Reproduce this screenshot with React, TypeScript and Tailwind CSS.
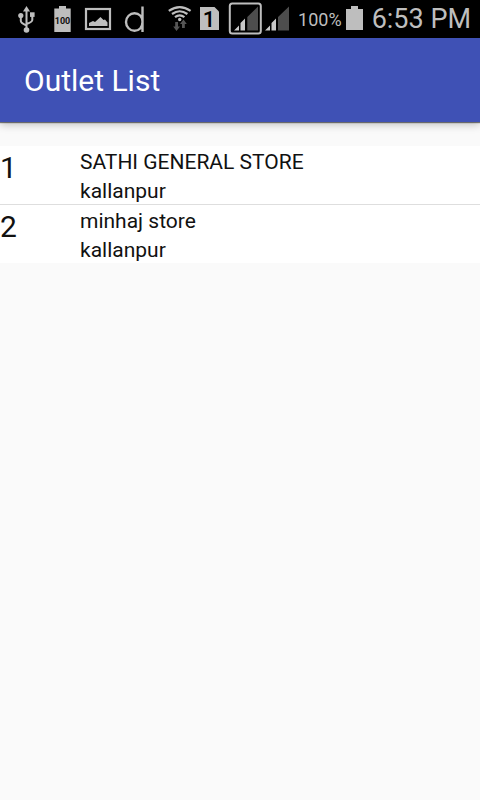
type Outlet = { id: number; name: string; area: string };

const outlets: Outlet[] = [
  { id: 1, name: "SATHI GENERAL STORE", area: "kallanpur" },
  { id: 2, name: "minhaj store", area: "kallanpur" },
];

function UsbIcon() {
  return (
    <svg className="h-[38px] w-6" viewBox="0 0 24 38" fill="none" stroke="#bebebe" strokeWidth="2" aria-hidden="true">
      <path d="M10.500 10v20M4.800 16v5q0 2 5.700 4.500M16.300 15v5q0 2-5.800 4" />
      <path d="M10.500 6l3.500 5.500H7z" fill="#bebebe" stroke="none" />
      <circle cx="4.800" cy="15.500" r="2.600" fill="#bebebe" stroke="none" />
      <rect x="14" y="12.300" width="4.600" height="4.600" fill="#bebebe" stroke="none" />
      <circle cx="10.500" cy="30" r="2.800" fill="#bebebe" stroke="none" />
    </svg>
  );
}

function BatteryFullIcon() {
  return (
    <svg className="h-[38px] w-5" viewBox="0 0 20 38" aria-hidden="true">
      <path d="M7 6h7v2.500h4.700V32H2.300V8.500H7z" fill="#bebebe" />
      <text x="10.500" y="24" fontSize="9" fontWeight="700" textAnchor="middle" fill="#111" className="font-[Roboto,sans-serif]">
        100
      </text>
    </svg>
  );
}

function PictureIcon() {
  return (
    <svg className="h-[38px] w-7" viewBox="0 0 28 38" aria-hidden="true">
      <rect x="2" y="9" width="24" height="20" fill="none" stroke="#bebebe" strokeWidth="2.200" />
      <path d="M5 26v-3l4-2 2 1 5.500-5 3 3 1.500-.5 2.500 3v3.500z" fill="#bebebe" />
    </svg>
  );
}

function AppLogo() {
  return (
    <svg className="h-[38px] w-5" viewBox="0 0 20 38" fill="none" stroke="#bebebe" strokeWidth="2.400" aria-hidden="true">
      <path d="M18.500 6.500V32M18.500 22C18.500 16.500 15 13.200 10.500 13.200S2 17 2 22s4 8.800 8.500 8.800 8-3.300 8-8.800" />
    </svg>
  );
}

function WifiIcon() {
  return (
    <svg className="h-[38px] w-6" viewBox="0 0 24 38" fill="none" stroke="#bebebe" strokeWidth="2.200" aria-hidden="true">
      <path d="M.8 10.800Q11.700 3.300 22.600 10.800M4 14Q11.700 8.500 19.400 14M7 17.200Q11.700 13.500 16.400 17.200" />
      <circle cx="11.700" cy="19.500" r="1.700" fill="#bebebe" stroke="none" />
      <path d="M8.500 31l-3.300-4.500h2V22h2.800v4.500h2zM15.500 19.500l3.300 4.500h-2v4h-2.800v-4h-2z" fill="#555" stroke="none" />
    </svg>
  );
}

function SimIcon() {
  return (
    <svg className="h-[38px] w-5" viewBox="0 0 20 38" aria-hidden="true">
      <path d="M0 7h14.500L19 11.500V30H0z" fill="#bebebe" />
      <text x="9" y="27" fontSize="22" fontWeight="500" textAnchor="middle" fill="#000" className="font-[Roboto,sans-serif]">
        1
      </text>
    </svg>
  );
}

function SignalIcons() {
  return (
    <svg className="h-[38px] w-[62px]" viewBox="0 0 62 38" aria-hidden="true">
      <rect x="1.800" y="3.500" width="31" height="30" rx="2.500" fill="none" stroke="#bebebe" strokeWidth="2" />
      <path d="M6 30.500l5-5v5zM12.500 30.500v-7.500l4.500-4.500v12zM37 30.500l5-5v5zM43.500 30.500v-7.500l4.500-4.500v12z" fill="#c8c8c8" />
      <path d="M19.300 30.500V17L30 6.500v24zM50 30.500V17L61 6.500v24z" fill="#4d4d4d" />
    </svg>
  );
}

function BatteryIcon() {
  return (
    <svg className="h-[38px] w-[18px]" viewBox="0 0 18 38" aria-hidden="true">
      <path d="M5 6h7v3h5v21H0V9h5z" fill="#bebebe" />
    </svg>
  );
}

function StatusBar() {
  return (
    <div className="flex h-[38px] items-center justify-between bg-black pr-[9px] pl-4 text-[#bebebe]">
      <div className="flex gap-3">
        <UsbIcon />
        <BatteryFullIcon />
        <PictureIcon />
        <AppLogo />
      </div>
      <div className="flex items-center gap-2">
        <WifiIcon />
        <SimIcon />
        <SignalIcons />
        <div className="flex items-center gap-1">
          <span className="pt-0.5 text-[18px] leading-9">100%</span>
          <BatteryIcon />
        </div>
        <time className="text-[27px] leading-[38px]">6:53 PM</time>
      </div>
    </div>
  );
}

export default function App() {
  return (
    <div className="min-h-screen bg-[#fafafa] font-[Roboto,sans-serif] text-[#111]">
      <StatusBar />
      <header className="flex h-[84px] items-center bg-[#3f51b5] px-6 pt-0.5 shadow-[0_1px_1px_rgba(0,0,0,0.5),0_3px_8px_rgba(0,0,0,0.22)]">
        <h1 className="text-[30px] leading-9 text-white">Outlet List</h1>
      </header>
      <main className="pt-6">
        <ul className="divide-y divide-[#dedede] bg-white">
          {outlets.map((outlet) => (
            <li key={outlet.id} className="flex">
              <span className="w-20 text-[30px] leading-[44px]">{outlet.id}</span>
              <div className="flex-1 text-[21px] leading-[25px]">
                <p className="pt-1">{outlet.name}</p>
                <p className="pt-1">{outlet.area}</p>
              </div>
            </li>
          ))}
        </ul>
      </main>
    </div>
  );
}
